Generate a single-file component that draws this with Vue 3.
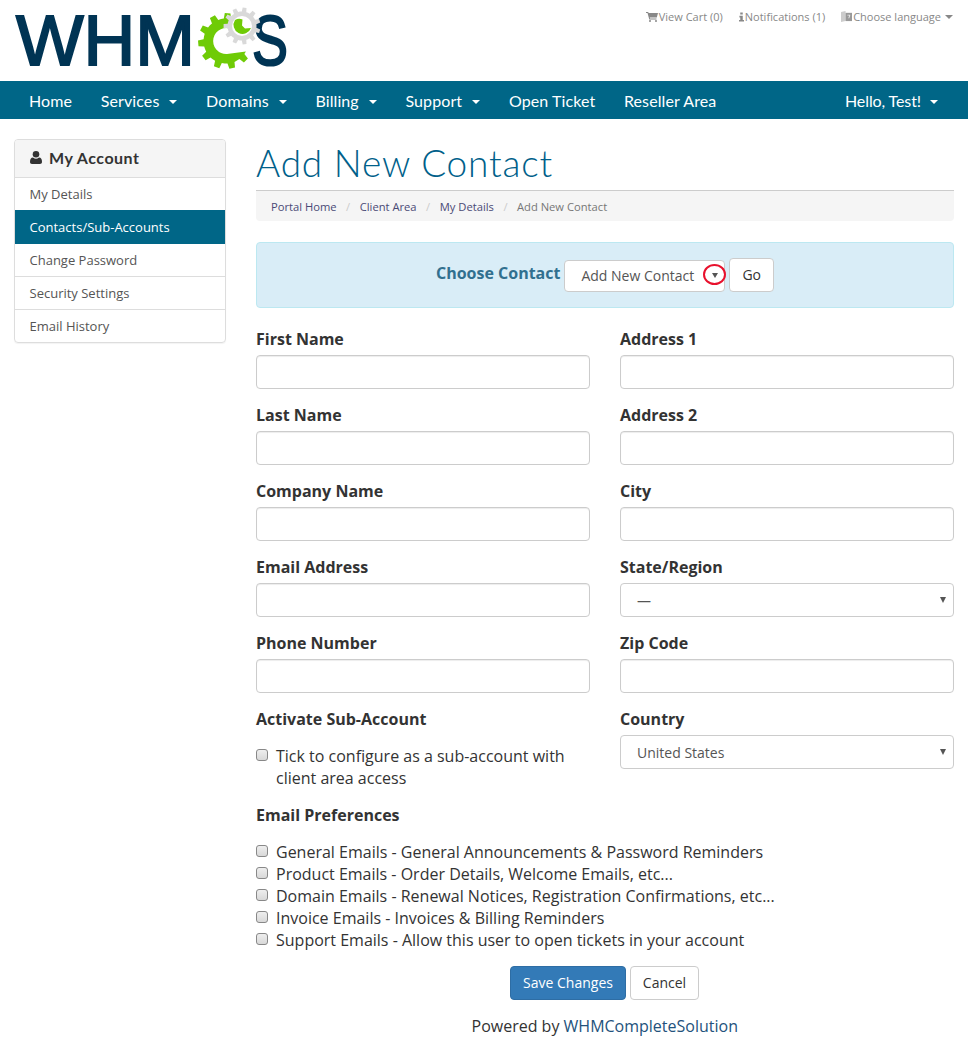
<template>
  <div class="page">
    <header class="top">
      <svg class="logo" width="300" height="81" viewBox="0 0 300 81">
        <text x="16" y="65" class="logo-text" textLength="179" lengthAdjust="spacingAndGlyphs">WHM</text>
        <text x="252" y="65" class="logo-text" textLength="36" lengthAdjust="spacingAndGlyphs">S</text>
        <path :d="greenGear" fill="#6fcb06" />
        <path :d="greyGear" fill="#d9d9d9" />
        <circle cx="242" cy="26" r="10" fill="#fff" />
        <path d="M235 20a9 9 0 1 0 16 8l-6 .5-3-3 .5-6a9 9 0 0 0-7.500.500z" fill="#6fcb06" />
      </svg>
      <div class="top-links">
        <a>
          <svg width="12" height="11" viewBox="0 0 12 11"><path d="M0 1h2.200l.4 1H12l-1.200 4.600H3.800l.3 1H10.500v1H3.300L1.500 2H0zM4 9a1 1 0 1 1 0 2 1 1 0 0 1 0-2zm6 0a1 1 0 1 1 0 2 1 1 0 0 1 0-2z" fill="#888" /></svg>
          View Cart (0)
        </a>
        <a>
          <svg width="5" height="10" viewBox="0 0 6 11"><path d="M1.500 0h3v2.500h-3zM.5 4h4v5H6v2H0V9h1.500V6H.5z" fill="#888" /></svg>
          Notifications (1)
        </a>
        <a>
          <svg width="11" height="11" viewBox="0 0 12 12"><path d="M0 1l5-1v11L0 12z" fill="#ccc" /><path d="M5 2h7v9H5z" fill="#999" /><path d="M7 4h3v1l-1 3H8l1-3H7z" fill="#eee" /></svg>
          Choose language <i class="caret grey"></i>
        </a>
      </div>
    </header>

    <nav class="navbar">
      <ul class="nav-left">
        <li v-for="item in navItems" :key="item.label">
          {{ item.label }}<i v-if="item.caret" class="caret"></i>
        </li>
      </ul>
      <div class="nav-right">Hello, Test!<i class="caret"></i></div>
    </nav>

    <div class="content">
      <aside class="sidebar">
        <div class="side-head">
          <svg width="12" height="13" viewBox="0 0 12 13"><circle cx="6" cy="3.300" r="3.300" fill="#333" /><path d="M0 11c0-3 1-4.500 3-4.500 1 .8 2 1.200 3 1.200s2-.4 3-1.200c2 0 3 1.500 3 4.500 0 1.300-.8 2-2 2H2c-1.200 0-2-.7-2-2z" fill="#333" /></svg>
          My Account
        </div>
        <a
          v-for="link in sideLinks"
          :key="link"
          class="side-link"
          :class="{ active: link === 'Contacts/Sub-Accounts' }"
        >{{ link }}</a>
      </aside>

      <main class="main">
        <h1>Add New Contact</h1>
        <div class="crumbs">
          <a>Portal Home</a><span class="sep">/</span>
          <a>Client Area</a><span class="sep">/</span>
          <a>My Details</a><span class="sep">/</span>
          <span class="current">Add New Contact</span>
        </div>

        <div class="chooser">
          <strong>Choose Contact</strong>
          <div class="chooser-select">
            Add New Contact
            <span class="ring"><i class="tri"></i></span>
          </div>
          <button class="btn">Go</button>
        </div>

        <form class="fields" @submit.prevent>
          <div class="column">
            <div v-for="label in leftFields" :key="label" class="group">
              <label>{{ label }}</label>
              <input type="text" />
            </div>
            <div class="group sub">
              <label>Activate Sub-Account</label>
              <div class="check sub-check">
                <span class="box"></span>
                <span>Tick to configure as a sub-account with<br />client area access</span>
              </div>
            </div>
          </div>
          <div class="column">
            <div v-for="field in rightFields" :key="field.label" class="group">
              <label>{{ field.label }}</label>
              <div v-if="field.select" class="select">
                <span>{{ field.select }}</span>
                <i class="tri"></i>
              </div>
              <input v-else type="text" />
            </div>
          </div>
        </form>

        <div class="prefs">
          <label>Email Preferences</label>
          <div class="pref-list">
            <div v-for="pref in prefs" :key="pref" class="check">
              <span class="box"></span>
              <span>{{ pref }}</span>
            </div>
          </div>
        </div>

        <div class="actions">
          <button class="btn primary">Save Changes</button>
          <button class="btn cancel">Cancel</button>
        </div>
      </main>
    </div>

    <footer class="footer">Powered by <a>WHMCompleteSolution</a></footer>
  </div>
</template>

<script setup>
const navItems = [
  { label: 'Home' },
  { label: 'Services', caret: true },
  { label: 'Domains', caret: true },
  { label: 'Billing', caret: true },
  { label: 'Support', caret: true },
  { label: 'Open Ticket' },
  { label: 'Reseller Area' }
]

const sideLinks = ['My Details', 'Contacts/Sub-Accounts', 'Change Password', 'Security Settings', 'Email History']

const leftFields = ['First Name', 'Last Name', 'Company Name', 'Email Address', 'Phone Number']

const rightFields = [
  { label: 'Address 1' },
  { label: 'Address 2' },
  { label: 'City' },
  { label: 'State/Region', select: '—' },
  { label: 'Zip Code' },
  { label: 'Country', select: 'United States' }
]

const prefs = [
  'General Emails - General Announcements & Password Reminders',
  'Product Emails - Order Details, Welcome Emails, etc...',
  'Domain Emails - Renewal Notices, Registration Confirmations, etc...',
  'Invoice Emails - Invoices & Billing Reminders',
  'Support Emails - Allow this user to open tickets in your account'
]

const polar = (cx, cy, r, deg) => {
  const rad = (deg * Math.PI) / 180
  return `${(cx + r * Math.cos(rad)).toFixed(1)} ${(cy + r * Math.sin(rad)).toFixed(1)}`
}

// outer outline of a cog, teeth are trapezoids between two radii
const cogOutline = (cx, cy, outer, root, teeth, from = 0, to = 360) => {
  const step = 360 / teeth
  const pts = []
  for (let a = from; a < to - 0.01; a += step) {
    const marks = [
      [root, a],
      [root, a + step * 0.22],
      [outer, a + step * 0.32],
      [outer, a + step * 0.68],
      [root, a + step * 0.78]
    ]
    for (const [r, deg] of marks) {
      if (deg <= to) pts.push(polar(cx, cy, r, deg))
    }
  }
  return pts
}

const greyGear = `M${cogOutline(242, 26, 18.500, 14.500, 11).join('L')}Z`

// C shape, open towards the grey cog at the upper right
const greenGear = (() => {
  const pts = cogOutline(226, 41, 28, 22.500, 11, 28, 300)
  return `M${pts.join('L')}L${polar(226, 41, 13, -60)}A13 13 0 1 0 ${polar(226, 41, 13, 85)}Z`
})()
</script>

<style>
html, body {
  margin: 0;
  background: #fff;
}
</style>

<style scoped>
.page {
  font-family: "Open Sans", "Liberation Sans", sans-serif;
  font-size: 16px;
  color: #333;
  height: 1044px;
  overflow: hidden;
}

a {
  text-decoration: none;
}

.top {
  position: relative;
  height: 81px;
  display: flex;
  justify-content: flex-end;
}

.logo {
  position: absolute;
  left: 0;
  top: 0;
}

.logo-text {
  font-family: "Liberation Sans", sans-serif;
  font-size: 70px;
  font-weight: 400;
  fill: #003454;
  stroke: #003454;
  stroke-width: 2px;
}

.top-links {
  display: flex;
  gap: 16px;
  padding: 9px 15px 0 0;
  font-size: 11px;
  line-height: 15px;
  color: #888;
  height: 15px;
}

.top-links a {
  display: flex;
  align-items: center;
  gap: 1px;
}

.navbar {
  height: 38px;
  background: #006687;
  display: flex;
  justify-content: space-between;
  align-items: center;
  color: #fff;
  font-family: Lato, "Liberation Sans", sans-serif;
  font-size: 16px;
  letter-spacing: 0.1px;
  padding: 0 30px 0 29px;
}

.nav-left {
  display: flex;
  gap: 28.700px;
  margin: 0;
  padding: 0;
  list-style: none;
}

.nav-right {
  letter-spacing: -0.1px;
}

.caret {
  display: inline-block;
  margin-left: 10px;
  vertical-align: middle;
  border-top: 4px solid #fff;
  border-left: 4px solid transparent;
  border-right: 4px solid transparent;
}

.nav-right .caret {
  margin-left: 9px;
}

.caret.grey {
  border-top-color: #888;
  margin-left: 3px;
}

.content {
  display: flex;
  padding: 20px 14px 0;
  gap: 30px;
}

.sidebar {
  width: 210px;
  height: 202px;
  flex: none;
  border: 1px solid #ddd;
  border-radius: 4px;
  box-shadow: 0 1px 1px rgba(0, 0, 0, 0.05);
  overflow: hidden;
  font-size: 13px;
}

.side-head {
  height: 37px;
  display: flex;
  align-items: center;
  gap: 7px;
  padding: 0 0 2px 15px;
  box-sizing: border-box;
  background: #f5f5f5;
  font-family: Lato, "Liberation Sans", sans-serif;
  font-size: 16px;
  font-weight: 700;
  letter-spacing: 0.5px;
  color: #333;
}

.side-link {
  display: flex;
  align-items: center;
  height: 32px;
  padding-left: 14.500px;
  border-top: 1px solid #ddd;
  color: #555;
}

.side-link.active {
  background: #006687;
  border-top-color: #006687;
  color: #fff;
}

.side-link.active + .side-link {
  border-top-color: #006687;
}

.main {
  flex: 1;
  min-width: 0;
}

h1 {
  margin: 0;
  height: 51px;
  border-bottom: 1px solid #ccc;
  font-family: Lato, "Liberation Sans", sans-serif;
  font-size: 37px;
  font-weight: 300;
  letter-spacing: 0.8px;
  line-height: 48px;
  color: #005f8a;
}

.crumbs {
  height: 30px;
  display: flex;
  align-items: center;
  padding-left: 15px;
  background: #f5f5f5;
  border-radius: 0 0 4px 4px;
  font-size: 11.200px;
  color: #777;
}

.crumbs a {
  color: #4a4a75;
}

.sep {
  padding: 0 9.500px;
  color: #ccc;
}

.chooser {
  margin-top: 21px;
  height: 64px;
  display: flex;
  justify-content: center;
  align-items: center;
  gap: 4px;
  background: #d9edf7;
  border: 1px solid #bce8f1;
  border-radius: 4px;
}

.chooser strong {
  color: #31708f;
  font-size: 16px;
  margin-top: -5px;
}

.chooser-select {
  position: relative;
  width: 161px;
  height: 32px;
  box-sizing: border-box;
  padding-left: 16px;
  background: #fff;
  border: 1px solid #ccc;
  border-radius: 4px;
  font-size: 14px;
  line-height: 30px;
  color: #555;
  margin-top: 2px;
}

.ring {
  position: absolute;
  right: -2px;
  top: 3px;
  width: 23px;
  height: 21px;
  box-sizing: border-box;
  display: flex;
  align-items: center;
  justify-content: center;
  border: 2.500px solid #e8112d;
  border-radius: 50%;
}

.ring .tri {
  border-top-width: 5px;
  margin-top: 1px;
}

.tri {
  display: block;
  border-top: 6px solid #555;
  border-left: 3px solid transparent;
  border-right: 3px solid transparent;
}

.btn {
  height: 34px;
  padding: 0 12px 2px;
  background: #fff;
  border: 1px solid #ccc;
  border-radius: 4px;
  font-family: inherit;
  font-size: 14px;
  color: #333;
}

.btn.primary {
  width: 116px;
  padding-left: 0;
  padding-right: 0;
  background: #337ab7;
  border-color: #2e6da4;
  color: #fff;
}

.btn.cancel {
  width: 69px;
  padding-left: 0;
  padding-right: 0;
}

.fields {
  display: flex;
  gap: 30px;
  margin-top: 20px;
}

.column {
  flex: 1;
  min-width: 0;
  display: flex;
  flex-direction: column;
}

.group {
  height: 76px;
}

label {
  display: block;
  height: 27px;
  font-size: 16px;
  font-weight: 700;
  line-height: 22px;
  color: #333;
}

input {
  display: block;
  width: 100%;
  height: 34px;
  box-sizing: border-box;
  border: 1px solid #ccc;
  border-radius: 4px;
  background: #fff;
  box-shadow: inset 0 1px 1px rgba(0, 0, 0, 0.075);
}

.select {
  height: 34px;
  box-sizing: border-box;
  display: flex;
  align-items: center;
  justify-content: space-between;
  padding: 0 7px 0 16px;
  border: 1px solid #ccc;
  border-radius: 4px;
  font-size: 14px;
  color: #555;
}

.check {
  display: flex;
  gap: 8px;
  font-size: 16px;
  line-height: 22px;
  color: #333;
}

.box {
  flex: none;
  width: 12px;
  height: 12px;
  margin-top: 4px;
  box-sizing: border-box;
  background: linear-gradient(#eee, #d8d8d8);
  border: 1px solid #888;
  border-radius: 3px;
}

.sub {
  height: 96px;
}

.sub-check {
  margin-top: 10px;
}

.prefs {
  margin-top: 0;
}

.pref-list {
  margin-top: 10px;
}

.actions {
  display: flex;
  justify-content: center;
  gap: 4px;
  margin-top: 15px;
  padding-right: 1px;
}

.footer {
  margin-top: 15px;
  padding-left: 471.500px;
  font-size: 16px;
  line-height: 22px;
  color: #333;
}

.footer a {
  color: #23527c;
}
</style>
